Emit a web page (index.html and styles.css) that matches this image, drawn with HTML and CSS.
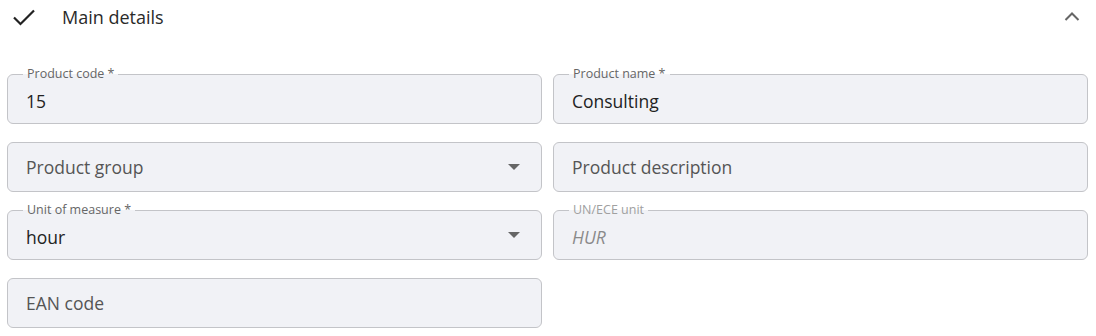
FILE: index.html
```html
<!DOCTYPE html>
<html lang="en">
<head>
  <meta charset="UTF-8" />
  <meta name="viewport" content="width=device-width, initial-scale=1.0"/>
  <title>Product - Main details</title>
  <link rel="stylesheet" href="styles.css">
</head>
<body>

  <!-- Section: main details -->
  <section class="seccion">
    <div class="seccion-titulo">
      <svg class="icono-check" width="24" height="24" viewBox="0 0 24 24">
        <path d="M2 12.5 L8.5 19 L22 5.5" fill="none" stroke="#222" stroke-width="2.2"/>
      </svg>
      <span class="titulo">Main details</span>
      <svg class="icono-chevron" width="18" height="18" viewBox="0 0 18 18">
        <path d="M2.5 12 L9 5.5 L15.5 12" fill="none" stroke="#666" stroke-width="2"/>
      </svg>
    </div>

    <div class="campos">
      <div class="campo con-etiqueta">
        <label>Product code *</label>
        <input type="text" value="15">
      </div>

      <div class="campo con-etiqueta">
        <label>Product name *</label>
        <input type="text" value="Consulting">
      </div>

      <div class="campo">
        <input type="text" placeholder="Product group">
        <span class="flecha"></span>
      </div>

      <div class="campo">
        <input type="text" placeholder="Product description">
      </div>

      <div class="campo con-etiqueta">
        <label>Unit of measure *</label>
        <input type="text" value="hour">
        <span class="flecha"></span>
      </div>

      <div class="campo con-etiqueta deshabilitado">
        <label>UN/ECE unit</label>
        <input type="text" value="HUR" disabled>
      </div>

      <div class="campo">
        <input type="text" placeholder="EAN code">
      </div>
    </div>
  </section>

</body>
</html>
```

FILE: styles.css
```css
/* General */
body {
  margin: 0;
  font-family: "Open Sans", Lato, Arial, sans-serif;
  background-color: #fff;
  color: #222;
}

.seccion {
  padding: 0 8px 0 7px;
}

/* Section header */
.seccion-titulo {
  display: flex;
  align-items: center;
  height: 34px;
  padding-left: 5px;
}

.icono-check {
  margin-right: 26px;
}

.titulo {
  flex: 1;
  font-size: 18px;
  color: #2a2a2a;
}

.icono-chevron {
  margin-right: 7px;
}

/* Fields */
.campos {
  display: grid;
  grid-template-columns: 1fr 1fr;
  column-gap: 11px;
  row-gap: 18px;
  margin-top: 40px;
}

.campo {
  position: relative;
  height: 50px;
  box-sizing: border-box;
  border: 1px solid #c3c4c8;
  border-radius: 6px;
  background-color: #f1f2f6;
}

.campo label {
  position: absolute;
  top: -8px;
  left: 15px;
  padding: 0 4px;
  font-size: 12.5px;
  line-height: 14px;
  color: #666;
  background: linear-gradient(to bottom, #fff 50%, #f1f2f6 50%);
}

.campo input {
  width: 100%;
  height: 100%;
  box-sizing: border-box;
  padding: 0 18px;
  border: none;
  background: transparent;
  font-family: inherit;
  font-size: 17.5px;
  color: #222;
  outline: none;
}

.campo input::placeholder {
  color: #555;
}

.con-etiqueta input {
  padding-top: 3px;
}

.deshabilitado label {
  color: #a0a0a0;
}

.deshabilitado input {
  font-style: italic;
  color: #8a8a8a;
}

/* Dropdown arrow */
.flecha {
  position: absolute;
  right: 21px;
  top: 50%;
  margin-top: -3px;
  width: 0;
  height: 0;
  border-left: 6.5px solid transparent;
  border-right: 6.5px solid transparent;
  border-top: 6px solid #666;
}
```
